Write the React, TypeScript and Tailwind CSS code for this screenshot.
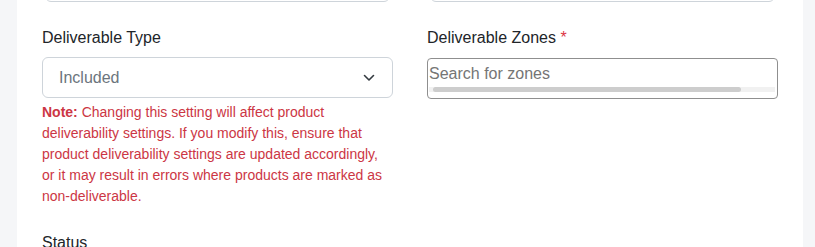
export default function App() {
    return (
        <div className="flex w-[815px] h-[247px] overflow-hidden bg-[#f5f6f8] font-['Liberation_Sans',Arial,sans-serif]">
            <div className="w-[17px] shrink-0" />
            <div className="flex-1 bg-white px-[25px]">
                <div className="grid grid-cols-2 gap-x-[34px]">
                    {/* previous row inputs, only the bottom edge shows */}
                    <div className="-mt-[39px] h-[41px] border border-[#ced4da] rounded-md mx-[3px]" />
                    <div className="-mt-[39px] h-[41px] border border-[#ced4da] rounded-md mx-[3px]" />

                    <div className="pt-[24px]">
                        <label className="block text-[16px] leading-6 text-[#212529] mb-[7px]">Deliverable Type</label>
                        <div className="h-[41px] border border-[#ced4da] rounded-[6px] flex items-center pl-[16px] pr-[16px]">
                            <span className="text-[16px] text-[#6c757d] flex-1">Included</span>
                            <svg width="12" height="8" viewBox="0 0 12 8" className="mr-[1px]">
                                <path d="M1.5 1.5 L6 6 L10.5 1.5" fill="none" stroke="#343a40" strokeWidth="1.6" strokeLinecap="round" strokeLinejoin="round" />
                            </svg>
                        </div>
                        <p className="mt-[4px] text-[14px] leading-[21px] text-[#cc3644] pr-[8px]">
                            <span className="font-bold">Note:</span> Changing this setting will affect product deliverability settings. If you modify this, ensure that product deliverability settings are updated accordingly, or it may result in errors where products are marked as non-deliverable.
                        </p>
                        <label className="block mt-[24px] text-[16px] leading-6 text-[#212529]">Status</label>
                    </div>

                    <div className="pt-[24px]">
                        <label className="block text-[16px] leading-6 text-[#212529] mb-[8px]">
                            Deliverable Zones <span className="text-[#dc3545]">*</span>
                        </label>
                        <div className="h-[41px] border border-[#8f8f8f] rounded-[4px] flex flex-col pt-[4px] px-[1px]">
                            <span className="text-[16px] leading-[22px] text-[#757575]">Search for zones</span>
                            <div className="mt-[2px] h-[5px] bg-[#f1f1f1] mr-[1px]">
                                <div className="ml-[4px] w-[308px] h-[5px] rounded-full bg-[#cdcdcd]" />
                            </div>
                        </div>
                    </div>
                </div>
            </div>
            <div className="w-[12px] shrink-0" />
        </div>
    );
}
